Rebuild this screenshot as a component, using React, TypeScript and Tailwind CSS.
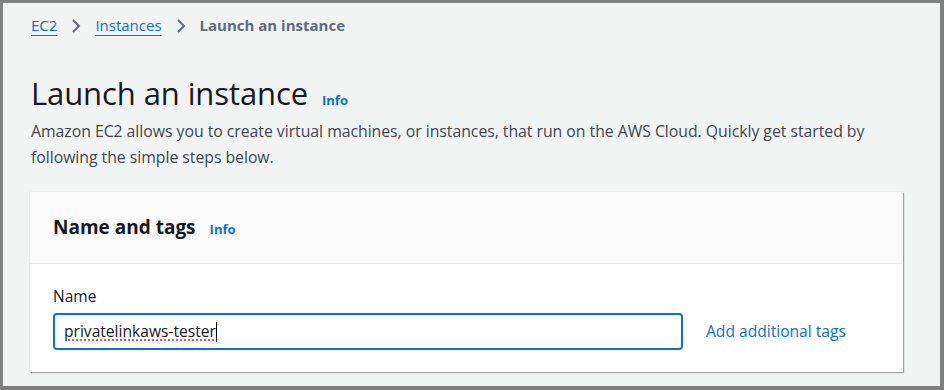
import React from "react";

const font = { fontFamily: '"Open Sans", "Noto Sans", sans-serif' };

function Chevron() {
  return (
    <svg width="10" height="16" viewBox="0 0 10 16" className="mx-[14px]">
      <path d="M2 2l6 6-6 6" fill="none" stroke="#5f6b7a" strokeWidth="2" />
    </svg>
  );
}

export default function App() {
  return (
    <div
      className="w-[944px] h-[390px] overflow-hidden bg-[#f2f3f3] border-t-[3px] border-l-[3px] border-r-[4px] border-b-[4px] border-[#808080] text-[#16191f]"
      style={font}
    >
      <div className="pl-[28px] pr-[37px]">
        <nav className="flex items-center h-[44px] pt-[1px] text-[15px]">
          <span className="text-[#0972d3] underline underline-offset-[4px] decoration-[1px]">EC2</span>
          <Chevron />
          <span className="text-[#0972d3] underline underline-offset-[4px] decoration-[1px]">Instances</span>
          <Chevron />
          <span className="font-bold text-[#5f6b7a]">Launch an instance</span>
        </nav>
        <div className="mt-[26px] flex items-baseline">
          <h1 className="text-[31px] leading-[40px] font-normal tracking-[-0.1px]">Launch an instance</h1>
          <span className="ml-[14px] text-[13px] font-bold text-[#0972d3]">Info</span>
        </div>
        <p className="mt-[5px] text-[15.8px] leading-[26px] text-[#414750] tracking-[-0.03px]">
          Amazon EC2 allows you to create virtual machines, or instances, that run on the AWS Cloud. Quickly get started by
          <br />
          following the simple steps below.
        </p>
        <div className="mt-[22px] ml-[-1px] bg-white shadow-[1px_1px_1px_rgba(0,0,0,0.3),0_0_1px_rgba(0,0,0,0.15)]">
          <div className="h-[72px] bg-[#fafafa] border-b border-[#e9ebed] flex items-center px-[23px]">
            <div className="flex items-baseline">
              <h2 className="text-[19px] font-bold">Name and tags</h2>
              <span className="ml-[14px] text-[13px] font-bold text-[#0972d3]">Info</span>
            </div>
          </div>
          <div className="px-[23px] pt-[22px] pb-[22px]">
            <div className="text-[15.5px] leading-[20px]">Name</div>
            <div className="mt-[7px] flex items-center">
              <div className="w-[630px] h-[37px] border-2 border-[#0972d3] rounded-[4px] flex items-center px-[9px] text-[15.6px]">
                <span className="underline decoration-dotted decoration-[#e22] underline-offset-[3px]">privatelinkaws-tester</span>
                <span className="w-[1px] h-[20px] bg-black" />
              </div>
              <span className="ml-[23px] text-[15.6px] text-[#0972d3]">Add additional tags</span>
            </div>
          </div>
        </div>
      </div>
    </div>
  );
}
